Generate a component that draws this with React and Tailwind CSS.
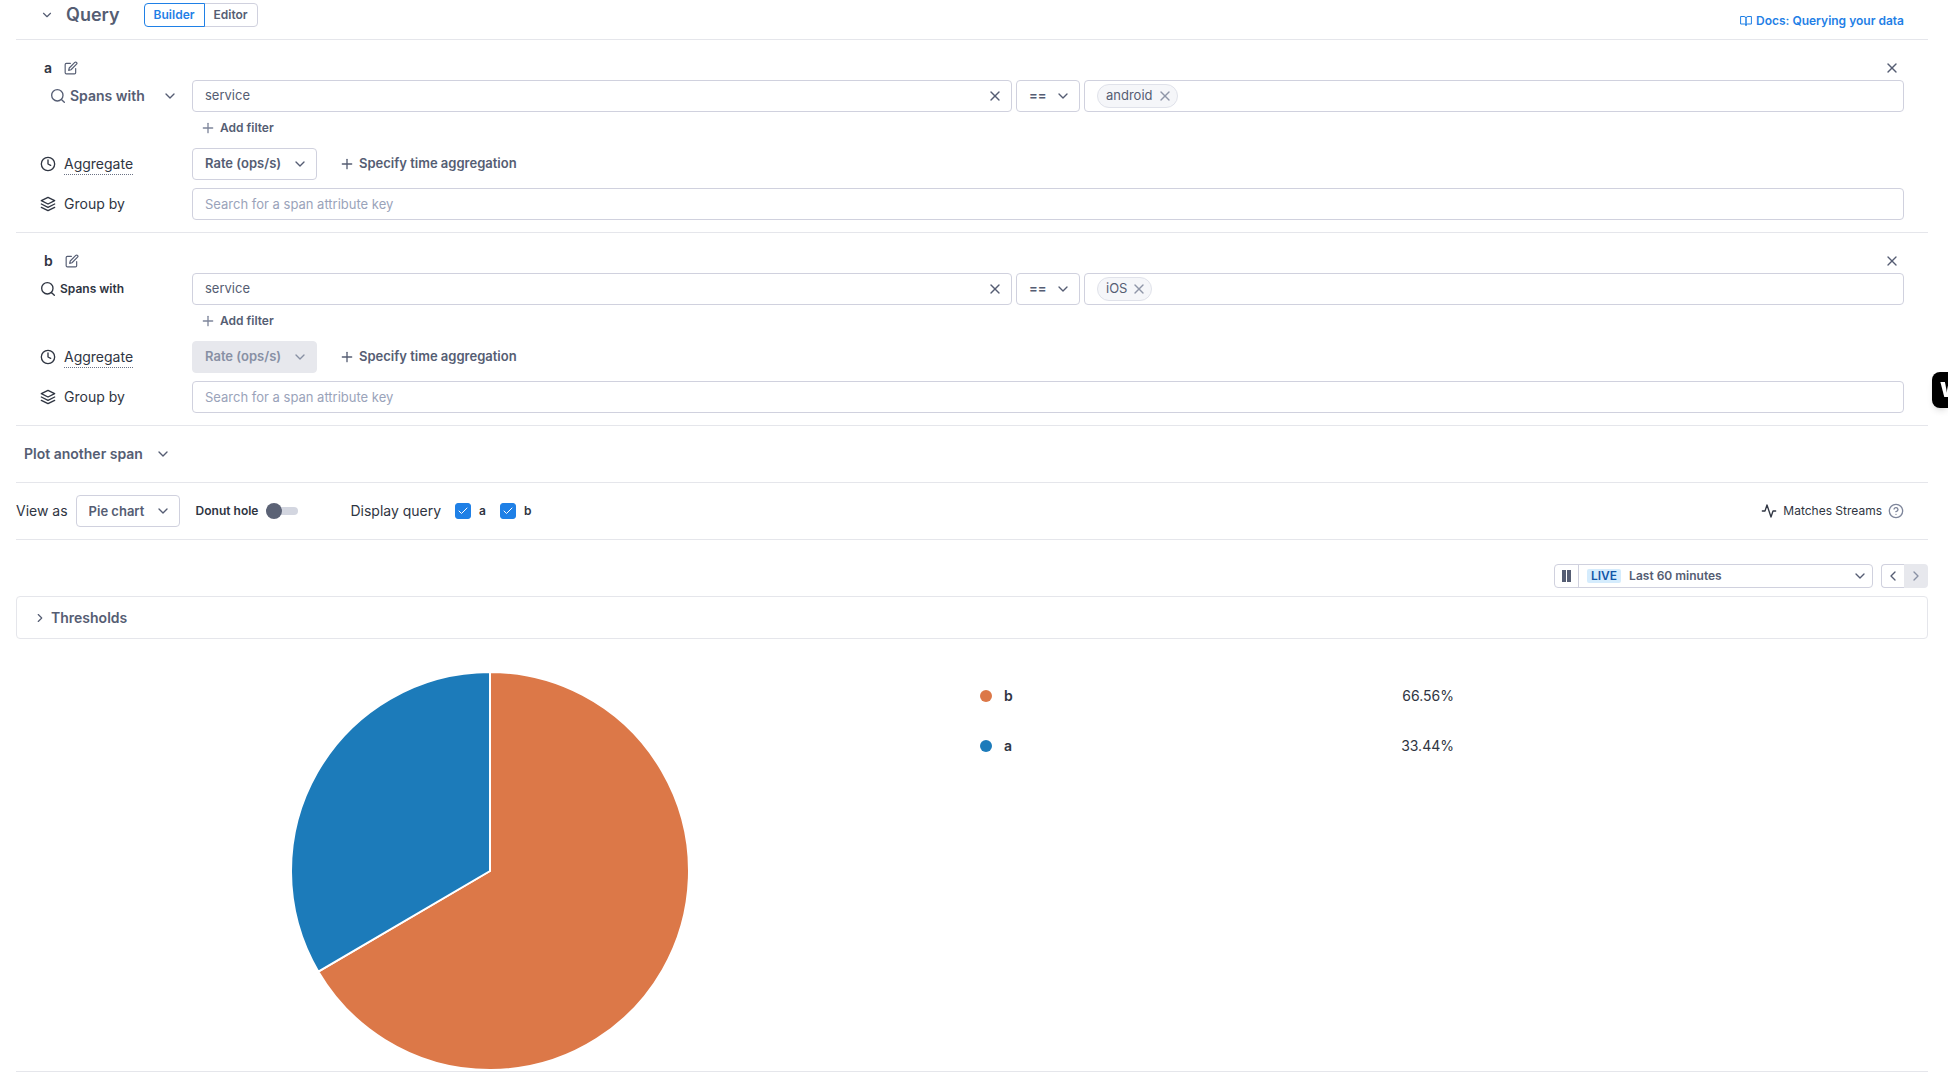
import React, { useState } from "react";
import {
  FiActivity,
  FiBookOpen,
  FiCheck,
  FiChevronDown,
  FiChevronLeft,
  FiChevronRight,
  FiClock,
  FiEdit,
  FiHelpCircle,
  FiLayers,
  FiPlus,
  FiX,
} from "react-icons/fi";

const SLICES = [
  { name: "b", value: 66.56, color: "#dc7848" },
  { name: "a", value: 33.44, color: "#1c7bba" },
];

const SearchIcon = () => (
  <svg
    width="16"
    height="16"
    viewBox="0 0 24 24"
    fill="none"
    stroke="currentColor"
    strokeWidth="2"
    strokeLinecap="round"
    className="shrink-0"
    aria-hidden="true"
  >
    <circle cx="11" cy="11" r="8.5" />
    <path d="M17.5 17.5l4 4" />
  </svg>
);

// Native select with our own chevron laid over it
const Select = ({ label, options, className, disabled = false }) => (
  <div className={`relative shrink-0 ${className}`}>
    <select
      aria-label={label}
      disabled={disabled}
      className="h-8 w-full appearance-none rounded-sm border border-[#d0d1de] bg-white pl-3 pr-7 text-[13px] font-semibold text-[#555d73] disabled:border-[#e7e8ed] disabled:bg-[#e7e8ed] disabled:text-[#8890a4] disabled:opacity-100"
    >
      {options.map((o) => (
        <option key={o}>{o}</option>
      ))}
    </select>
    <FiChevronDown
      size={16}
      className={`pointer-events-none absolute right-[9px] top-2 ${disabled ? "text-[#8890a4]" : "text-[#555d73]"}`}
    />
  </div>
);

const QueryCheckbox = ({ name }) => {
  const [checked, setChecked] = useState(true);
  return (
    <label className="flex items-center gap-2 text-xs font-semibold">
      <span className="relative flex h-4 w-4">
        <input
          type="checkbox"
          checked={checked}
          onChange={() => setChecked(!checked)}
          className="h-4 w-4 appearance-none rounded-[3px] border border-[#d0d1de] checked:border-[#1f80e6] checked:bg-[#1f80e6]"
        />
        {checked && <FiCheck size={12} className="pointer-events-none absolute left-0.5 top-0.5 text-white" />}
      </span>
      {name}
    </label>
  );
};

const QuerySection = ({ name, service, primary = false }) => (
  <section className="border-b border-[#e5e6eb] pb-3 pl-6 pr-6 pt-4">
    <div className="flex h-6 items-center gap-3 pl-1 pr-1">
      <h2 className="text-sm font-semibold">{name}</h2>
      <button aria-label={`Rename query ${name}`} className="text-[#555d73]">
        <FiEdit size={14} />
      </button>
      <button aria-label={`Remove query ${name}`} className="ml-auto text-[#555d73]">
        <FiX size={16} />
      </button>
    </div>

    <div className="flex items-center">
      {primary ? (
        <div className="relative flex w-38 shrink-0 items-center pl-2.5 text-[#555d73]">
          <SearchIcon />
          <select aria-label="Source" className="h-8 w-28 appearance-none pl-1 text-sm font-semibold">
            <option>Spans with</option>
          </select>
          <FiChevronDown size={16} className="pointer-events-none absolute right-3.5 top-2" />
        </div>
      ) : (
        <div className="flex w-38 shrink-0 items-center gap-1 text-xs font-semibold">
          <SearchIcon />
          Spans with
        </div>
      )}
      <div className="flex flex-1 gap-1">
        <div className="flex h-8 flex-1 items-center rounded-sm border border-[#d0d1de] px-3 text-[#555d73]">
          <input
            aria-label="Attribute"
            defaultValue="service"
            className="min-w-0 flex-1 bg-transparent text-[13px] outline-none"
          />
          <button aria-label="Clear attribute" className="-mr-1">
            <FiX size={16} />
          </button>
        </div>
        <Select label="Operator" options={["==", "!="]} className="w-16" />
        <div className="flex h-8 flex-1 items-center rounded-sm border border-[#d0d1de] px-3 text-[13px] text-[#555d73]">
          <span className="flex h-6 items-center gap-1 rounded-full border border-[#e0e2ea] bg-[#f5f6f9] pl-2 pr-1">
            {service}
            <button aria-label={`Remove ${service}`} className="text-[#8f96a8]">
              <FiX size={16} />
            </button>
          </span>
          <input aria-label="Value" className="min-w-0 flex-1 bg-transparent outline-none" />
        </div>
      </div>
    </div>

    <button className="ml-40 mt-1 flex h-6 items-center gap-1 text-xs font-semibold text-[#555d73]">
      <FiPlus size={16} className="text-[#7d859a]" />
      Add filter
    </button>

    <div className="mt-2 flex items-center">
      <div className="flex w-38 shrink-0 items-center gap-2 text-sm">
        <FiClock size={16} />
        <span className="border-b border-dotted border-[#6b7284]">Aggregate</span>
      </div>
      <Select label="Aggregate" options={["Rate (ops/s)", "Error (%)"]} className="w-[125px]" disabled={!primary} />
      <button className="ml-5.5 flex h-8 items-center gap-1 text-[13px] font-semibold text-[#555d73]">
        <FiPlus size={16} />
        Specify time aggregation
      </button>
    </div>

    <div className="mt-2 flex items-center">
      <label htmlFor={`group-${name}`} className="flex w-38 shrink-0 items-center gap-2 text-sm">
        <FiLayers size={16} />
        Group by
      </label>
      <input
        id={`group-${name}`}
        placeholder="Search for a span attribute key"
        className="h-8 min-w-0 flex-1 rounded-sm border border-[#d0d1de] px-3 text-[13px] placeholder:text-[#9aa3ba]"
      />
    </div>
  </section>
);

const PieChart = () => {
  const total = SLICES.reduce((sum, s) => sum + s.value, 0);
  const point = (share) => {
    const angle = share * 2 * Math.PI;
    return `${200 + 199 * Math.sin(angle)} ${200 - 199 * Math.cos(angle)}`;
  };
  let start = 0;
  return (
    <svg viewBox="0 0 400 400" className="h-[400px] w-full" role="img" aria-label="Share of spans by query">
      {SLICES.map((s) => {
        const end = start + s.value / total;
        const d = `M200 200L${point(start)}A199 199 0 ${end - start > 0.5 ? 1 : 0} 1 ${point(end)}Z`;
        start = end;
        return <path key={s.name} d={d} fill={s.color} stroke="#fff" strokeWidth="2" strokeLinejoin="round" />;
      })}
    </svg>
  );
};

const App = () => {
  const [mode, setMode] = useState("Builder");
  const [donut, setDonut] = useState(false);

  return (
    <div className="min-h-screen overflow-hidden bg-white pl-4 pr-5 font-[Inter,sans-serif] text-[#2f3542]">
      {/* Header */}
      <header className="flex h-10 items-start border-b border-[#e5e6eb] pl-6 pr-6 pt-[3px] text-[#555d73]">
        <button aria-label="Collapse query" className="flex h-6 items-center">
          <FiChevronDown size={14} />
        </button>
        <h1 className="ml-3 text-lg/6 font-semibold">Query</h1>
        <div className="ml-6 flex text-xs font-semibold">
          {["Builder", "Editor"].map((m) => (
            <button
              key={m}
              onClick={() => setMode(m)}
              className={`-mr-px h-6 border px-[9px] first:rounded-l-sm last:rounded-r-sm ${
                mode === m ? "relative border-[#1f80e6] text-[#1f80e6]" : "border-[#d0d1de]"
              }`}
            >
              {m}
            </button>
          ))}
        </div>
        <a href="#docs" className="ml-auto mt-1.5 flex items-center gap-1 text-xs/6 font-semibold text-[#1f80e6]">
          <FiBookOpen size={12} />
          Docs: Querying your data
        </a>
      </header>

      <QuerySection name="a" service="android" primary />
      <QuerySection name="b" service="iOS" />

      <div className="border-b border-[#e5e6eb] px-2 py-3">
        <button className="flex h-8 items-center gap-3 text-sm font-semibold text-[#555d73]">
          Plot another span
          <FiChevronDown size={16} />
        </button>
      </div>

      {/* Display options */}
      <div className="flex items-center border-b border-[#e5e6eb] py-3 text-sm">
        <span>View as</span>
        <Select label="View as" options={["Pie chart", "Line chart", "Table"]} className="ml-2 w-[104px]" />
        <label className="ml-4 flex items-center gap-2 text-xs font-semibold">
          Donut hole
          <span className="relative flex h-4 w-8 items-center">
            <input
              type="checkbox"
              role="switch"
              checked={donut}
              onChange={() => setDonut(!donut)}
              className="peer h-2 w-8 appearance-none rounded-full bg-[#d3d6e0]"
            />
            <span className="pointer-events-none absolute left-0 top-0 h-4 w-4 rounded-full bg-[#5b6275] peer-checked:left-4" />
          </span>
        </label>
        <fieldset className="ml-13 flex items-center gap-3.5">
          <legend className="float-left">Display query</legend>
          <QueryCheckbox name="a" />
          <QueryCheckbox name="b" />
        </fieldset>
        <div className="ml-auto flex items-center gap-1.5 pr-6 text-xs">
          <FiActivity size={16} />
          Matches Streams
          <button aria-label="Help" className="text-[#7d859a]">
            <FiHelpCircle size={16} />
          </button>
        </div>
      </div>

      {/* Time range */}
      <div className="mt-6 flex justify-end gap-2 text-[#555d73]">
        <div className="flex h-6 w-[319px] rounded-sm border border-[#d0d1de]">
          <button aria-label="Pause" className="flex w-6 items-center justify-center gap-px border-r border-[#d0d1de]">
            <span className="h-3 w-1 bg-[#555d73]" />
            <span className="h-3 w-1 bg-[#555d73]" />
          </button>
          <button className="flex flex-1 items-center px-2 text-xs font-semibold">
            <span className="mr-2 rounded-xs bg-[#d5ecfd] px-1 text-xs/[14px] text-[#1257a8]">LIVE</span>
            Last 60 minutes
            <FiChevronDown size={16} className="-mr-1 ml-auto" />
          </button>
        </div>
        <div className="flex">
          <button
            aria-label="Earlier"
            className="flex h-6 w-[23px] items-center justify-center rounded-l-sm border border-r-0 border-[#d0d1de]"
          >
            <FiChevronLeft size={16} />
          </button>
          <button
            aria-label="Later"
            disabled
            className="flex h-6 w-6 items-center justify-center rounded-r-sm bg-[#e7e8ed] text-[#8890a4]"
          >
            <FiChevronRight size={16} />
          </button>
        </div>
      </div>

      <button className="mt-2 flex h-[43px] w-full items-center gap-1 rounded-sm border border-[#e5e6eb] px-4 text-sm font-semibold text-[#555d73]">
        <FiChevronRight size={14} />
        Thresholds
      </button>

      {/* Chart and legend */}
      <div className="grid grid-cols-2 gap-4 border-b border-[#e5e6eb] pt-8">
        <PieChart />
        <table className="w-1/2 self-start text-sm">
          <tbody>
            {SLICES.map((s) => (
              <tr key={s.name} className="h-[50px]">
                <th scope="row" className="p-0 text-left font-semibold">
                  <span className="flex items-center gap-3">
                    <span className="h-3 w-3 rounded-full" style={{ backgroundColor: s.color }} />
                    {s.name}
                  </span>
                </th>
                <td className="p-0 text-right">{s.value.toFixed(2)}%</td>
              </tr>
            ))}
          </tbody>
        </table>
      </div>

      {/* Side widget tab */}
      <button
        aria-label="Open widget"
        className="fixed right-0 top-[372px] flex h-9 w-4 items-center overflow-hidden rounded-l-lg bg-black pl-2 text-xl font-black text-white shadow-md"
      >
        W
      </button>
    </div>
  );
};

export default App;
